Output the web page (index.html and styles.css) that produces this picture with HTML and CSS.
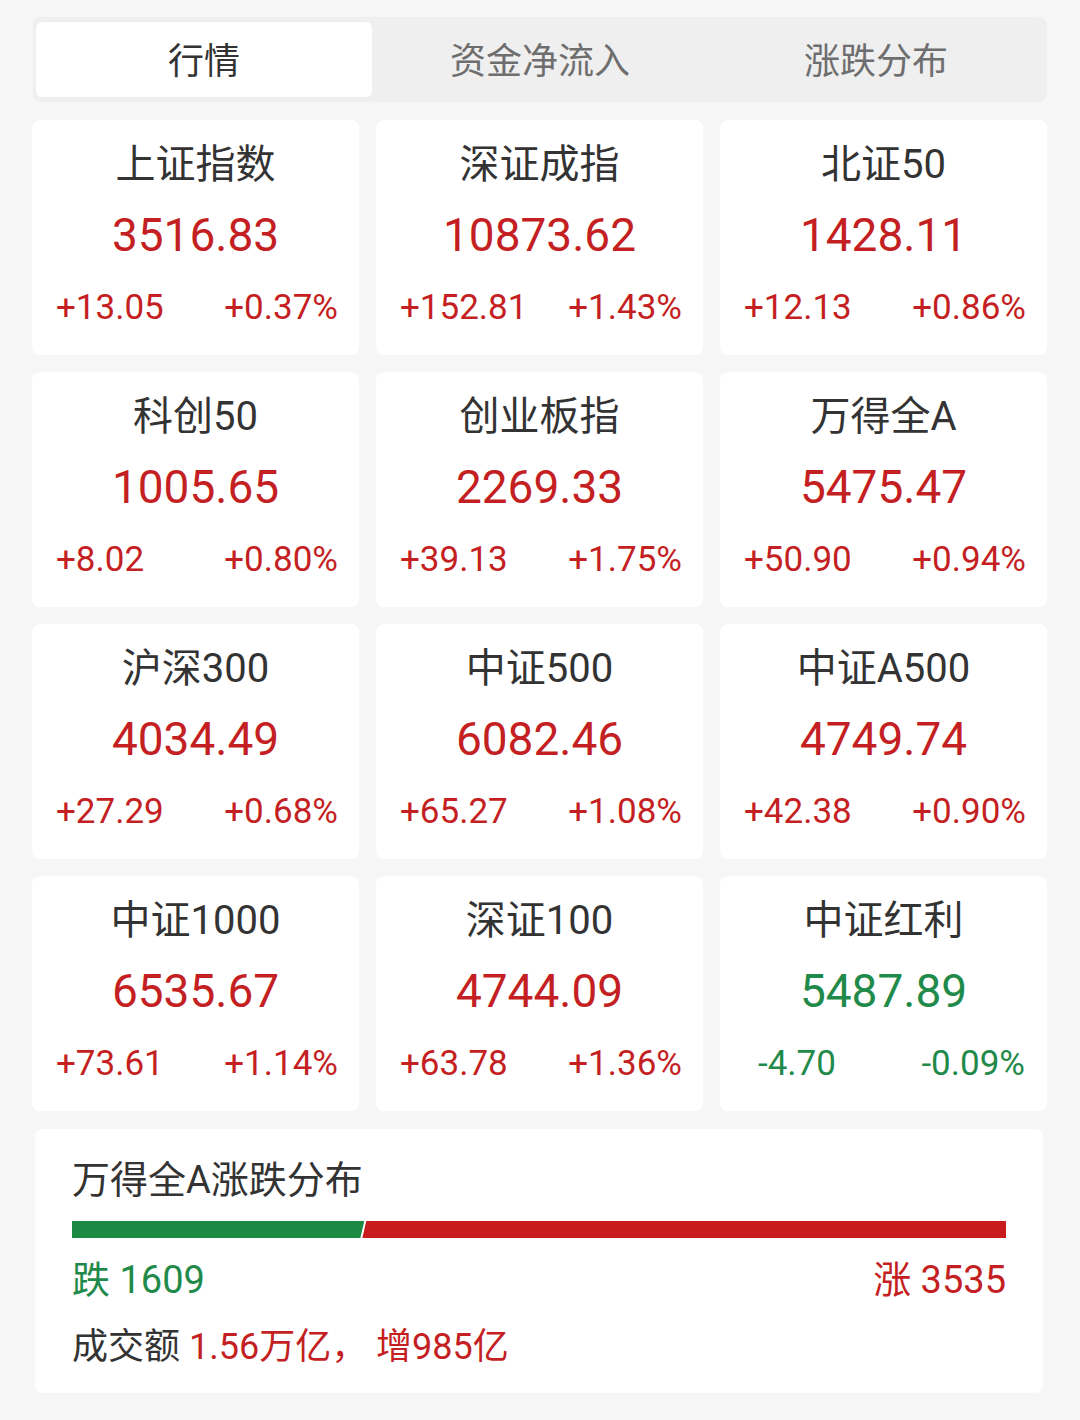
FILE: index.html
```html
<!DOCTYPE html>
<html lang="zh-CN">
<head>
<meta charset="utf-8">
<link rel="stylesheet" href="styles.css">
</head>
<body>
<div class="page">
  <div class="tabs">
    <div class="tab active">行情</div>
    <div class="tab">资金净流入</div>
    <div class="tab">涨跌分布</div>
  </div>

  <div class="grid">
    <div class="card up"><div class="name">上证指数</div><div class="price">3516.83</div><div class="chg"><span>+13.05</span><span>+0.37%</span></div></div>
    <div class="card up"><div class="name">深证成指</div><div class="price">10873.62</div><div class="chg"><span>+152.81</span><span>+1.43%</span></div></div>
    <div class="card up"><div class="name">北证50</div><div class="price">1428.11</div><div class="chg"><span>+12.13</span><span>+0.86%</span></div></div>

    <div class="card up"><div class="name">科创50</div><div class="price">1005.65</div><div class="chg"><span>+8.02</span><span>+0.80%</span></div></div>
    <div class="card up"><div class="name">创业板指</div><div class="price">2269.33</div><div class="chg"><span>+39.13</span><span>+1.75%</span></div></div>
    <div class="card up"><div class="name">万得全A</div><div class="price">5475.47</div><div class="chg"><span>+50.90</span><span>+0.94%</span></div></div>

    <div class="card up"><div class="name">沪深300</div><div class="price">4034.49</div><div class="chg"><span>+27.29</span><span>+0.68%</span></div></div>
    <div class="card up"><div class="name">中证500</div><div class="price">6082.46</div><div class="chg"><span>+65.27</span><span>+1.08%</span></div></div>
    <div class="card up"><div class="name">中证A500</div><div class="price">4749.74</div><div class="chg"><span>+42.38</span><span>+0.90%</span></div></div>

    <div class="card up"><div class="name">中证1000</div><div class="price">6535.67</div><div class="chg"><span>+73.61</span><span>+1.14%</span></div></div>
    <div class="card up"><div class="name">深证100</div><div class="price">4744.09</div><div class="chg"><span>+63.78</span><span>+1.36%</span></div></div>
    <div class="card down"><div class="name">中证红利</div><div class="price">5487.89</div><div class="chg"><span>-4.70</span><span>-0.09%</span></div></div>
  </div>

  <div class="dist">
    <div class="dist-title">万得全A涨跌分布</div>
    <div class="bar">
      <div class="bar-down" style="width: 31.3%"></div>
      <div class="bar-up"></div>
    </div>
    <div class="counts">
      <span class="cnt-down">跌&nbsp;1609</span>
      <span class="cnt-up">涨&nbsp;3535</span>
    </div>
    <div class="volume">成交额 <span class="red">1.56万亿， 增985亿</span></div>
  </div>
</div>
</body>
</html>
```

FILE: styles.css
```css
* { box-sizing: border-box; }
html, body {
  margin: 0;
  padding: 0;
  background: #f6f6f6;
}
body {
  font-family: Roboto, "Noto Sans CJK SC", sans-serif;
  color: #333;
}
.page {
  padding: 17px 33px 0 32px;
}
.tabs {
  display: flex;
  background: #efefef;
  border-radius: 8px;
  padding: 5px 3px;
  margin-left: 1px;
  height: 85px;
}
.tab {
  flex: 1;
  display: flex;
  align-items: center;
  justify-content: center;
  font-family: "Noto Sans CJK SC", sans-serif;
  font-size: 36px;
  line-height: 1;
  padding-bottom: 4px;
  color: #6e6e6e;
}
.tab.active {
  background: #fff;
  color: #333;
  border-radius: 6px;
}
.grid {
  margin-top: 18px;
  display: grid;
  grid-template-columns: repeat(3, 327px);
  column-gap: 17px;
  row-gap: 17px;
}
.card {
  background: #fff;
  border-radius: 8px;
  height: 235px;
  display: flex;
  flex-direction: column;
  align-items: center;
  padding-top: 20px;
}
.name {
  font-family: Roboto, "Noto Sans CJK SC", sans-serif;
  font-size: 40px;
  line-height: 50px;
  color: #333;
}
.price {
  margin-top: 15px;
  font-size: 46px;
  line-height: 60px;
}
.chg {
  margin-top: 20px;
  width: 100%;
  display: flex;
  justify-content: space-between;
  padding: 0 21px 0 24px;
  font-size: 35px;
  line-height: 46px;
}
.up .price, .up .chg { color: #c41f22; }
.down .price, .down .chg { color: #1f8a4a; }
.down .chg { padding: 0 22px 0 38px; }

.dist {
  margin: 18px 4px 0 3px;
  background: #fff;
  border-radius: 8px;
  height: 264px;
  padding: 26px 37px 0 37px;
}
.dist-title {
  font-size: 38px;
  line-height: 50px;
  color: #333;
}
.bar {
  margin-top: 16px;
  height: 17px;
  display: flex;
}
.bar-down {
  background: #1d8a44;
  clip-path: polygon(0 0, 100% 0, calc(100% - 4px) 100%, 0 100%);
}
.bar-up {
  flex: 1;
  background: #c81b1b;
  margin-left: -2px;
  clip-path: polygon(4px 0, 100% 0, 100% 100%, 0 100%);
}
.counts {
  margin-top: 18px;
  display: flex;
  justify-content: space-between;
  font-size: 38px;
  line-height: 48px;
}
.cnt-down { color: #1f8a4a; }
.cnt-up { color: #c41f22; }
.volume {
  margin-top: 19px;
  font-size: 36px;
  line-height: 48px;
  color: #333;
}
.red { color: #c41f22; }
```
